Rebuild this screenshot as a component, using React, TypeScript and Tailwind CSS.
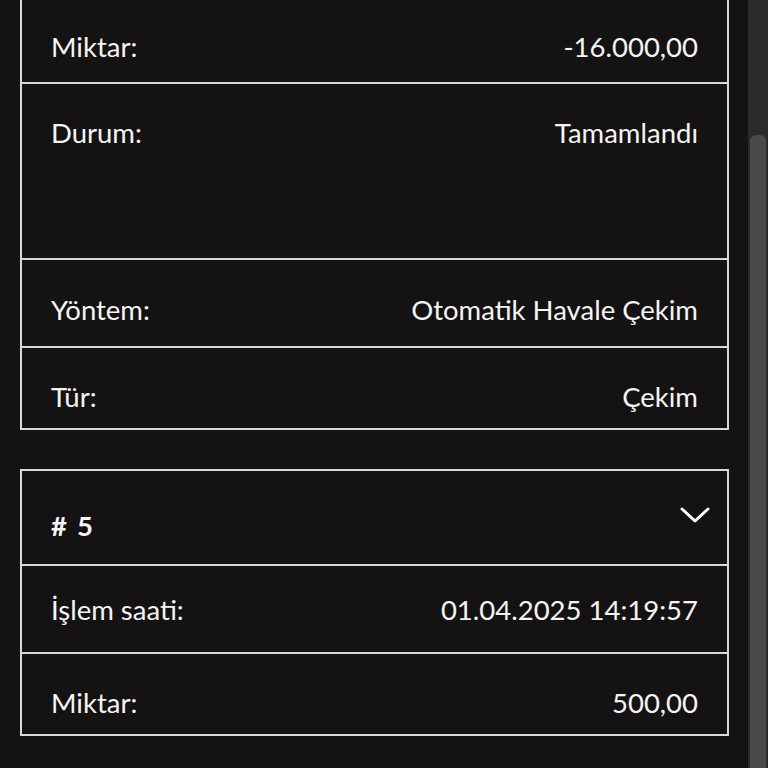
import { ReactNode } from 'react';

interface RowProps {
  label: ReactNode;
  value?: ReactNode;
  className: string;
  last?: boolean;
}

function Row({ label, value, className, last }: RowProps) {
  return (
    <div
      className={`flex items-start justify-between px-[29px] ${
        last ? '' : 'border-b-2 border-[#d9d9d9]'
      } ${className}`}
    >
      <span>{label}</span>
      {value !== undefined && <span>{value}</span>}
    </div>
  );
}

function ChevronDown() {
  return (
    <svg width="30" height="18" viewBox="0 0 30 18" fill="none" className="mt-[-4px] mr-[-12px]">
      <polyline
        points="2,3 15,15 28,3"
        stroke="#ffffff"
        strokeWidth="3"
        strokeLinecap="round"
        strokeLinejoin="round"
      />
    </svg>
  );
}

export default function App() {
  return (
    <div
      className="flex h-[768px] w-[768px] overflow-hidden bg-[#141212] text-[27.5px] leading-[32px] text-[#f4f4f4]"
      style={{ fontFamily: 'Lato, "Open Sans", sans-serif' }}
    >
      {/* Content */}
      <div className="w-[748px] shrink-0 overflow-hidden">
        {/* Card #4 (scrolled, top cut off) */}
        <div className="ml-[20px] mt-[-2px] w-[709px] border-2 border-[#d9d9d9]">
          <Row label="Miktar:" value="-16.000,00" className="h-[84px] pt-[31px]" />
          <Row label="Durum:" value="Tamamlandı" className="h-[176px] pt-[33px]" />
          <Row label="Yöntem:" value="Otomatik Havale Çekim" className="h-[88px] pt-[34px]" />
          <Row label="Tür:" value="Çekim" className="h-[80px] pt-[33px]" last />
        </div>

        {/* Card #5 */}
        <div className="ml-[20px] mt-[39px] w-[709px] border-2 border-[#d9d9d9]">
          <div className="flex h-[95px] items-start justify-between border-b-2 border-[#d9d9d9] px-[29px] pt-[39px]">
            <span className="font-bold">
              #&nbsp;&thinsp;5
            </span>
            <ChevronDown />
          </div>
          <Row label="İşlem saati:" value="01.04.2025 14:19:57" className="h-[88px] pt-[28px]" />
          <Row label="Miktar:" value="500,00" className="h-[80px] pt-[33px]" last />
        </div>
      </div>

      {/* Scrollbar */}
      <div className="relative w-[20px] shrink-0 bg-[#2b2b2b]">
        <div className="absolute left-[2px] right-[2px] top-[135px] h-[700px] rounded-[6px] bg-[#4a4a4a]" />
      </div>
    </div>
  );
}
